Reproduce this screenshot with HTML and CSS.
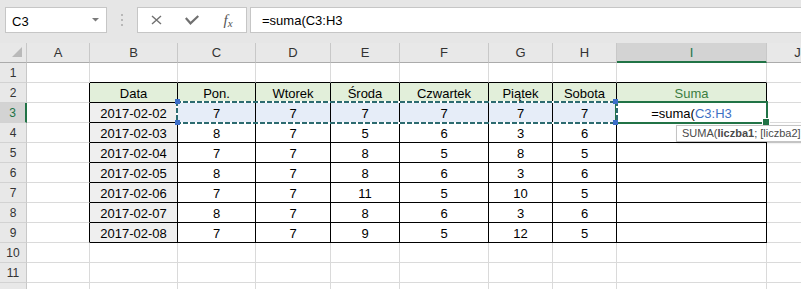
FILE: index.html
```html
<!DOCTYPE html>
<html lang="pl">
  <head>
      <meta charset="UTF-8">
      <title>Arkusz - suma</title>
      <link rel="stylesheet" href="styles.css">
  </head>
  <body>
      <div class="topbar">
          <div class="namebox">
              <span>C3</span>
              <svg width="7" height="4" viewBox="0 0 7 4"><polygon points="0,0 7,0 3.5,3.5" fill="#7a7a7a"/></svg>
          </div>
          <div class="grip">
              <svg width="2" height="12" viewBox="0 0 2 12"><rect y="0" width="2" height="2" fill="#b8b8b8"/><rect y="5" width="2" height="2" fill="#b8b8b8"/><rect y="10" width="2" height="2" fill="#b8b8b8"/></svg>
          </div>
          <div class="fxbtns">
              <span class="btn"><svg width="11" height="10" viewBox="0 0 11 10"><path d="M1 1L10 9M10 1L1 9" stroke="#707070" stroke-width="1.4" fill="none"/></svg></span>
              <span class="btn"><svg width="14" height="10" viewBox="0 0 14 10"><path d="M0.8 3L5.5 8.3L13.3 1" stroke="#707070" stroke-width="2.2" fill="none"/></svg></span>
              <span class="btn fx"><i>f</i><i class="sx">x</i></span>
          </div>
          <div class="formula">=suma(C3:H3</div>
      </div>

      <div class="sheet">
          <div class="row head">
              <div><svg class="corner" width="26" height="19" viewBox="0 0 26 19"><polygon points="12,14 22,14 22,4" fill="#b9b9b9"/></svg></div>
              <div>A</div><div>B</div><div>C</div><div>D</div><div>E</div><div>F</div><div>G</div><div>H</div><div class="on">I</div><div>J</div>
          </div>
          <div class="row">
              <div class="rh">1</div><div></div>
              <div class="tt"></div><div class="tt"></div><div class="tt"></div><div class="tt"></div><div class="tt"></div><div class="tt"></div><div class="tt"></div><div class="tt"></div>
              <div></div>
          </div>
          <div class="row">
              <div class="rh">2</div><div class="tl"></div>
              <div class="t hd">Data</div><div class="t hd">Pon.</div><div class="t hd">Wtorek</div><div class="t hd">Środa</div><div class="t hd">Czwartek</div><div class="t hd">Piątek</div><div class="t hd">Sobota</div><div class="t hd suma">Suma</div>
              <div></div>
          </div>
          <div class="row">
              <div class="rh on">3</div><div class="tl"></div>
              <div class="t dt">2017-02-02</div>
              <div class="t sel anchor">7<div class="ants"></div></div>
              <div class="t sel">7</div><div class="t sel">7</div><div class="t sel">7</div><div class="t sel">7</div><div class="t sel">7</div>
              <div class="t anchor">=suma(<span class="ref">C3:H3</span>
                  <div class="cur"></div>
                  <div class="tip">SUMA(<b>liczba1</b>; [liczba2]; ...)</div>
              </div>
              <div></div>
          </div>
          <div class="row">
              <div class="rh">4</div><div class="tl"></div>
              <div class="t dt">2017-02-03</div><div class="t">8</div><div class="t">7</div><div class="t">5</div><div class="t">6</div><div class="t">3</div><div class="t">6</div><div class="t"></div>
              <div></div>
          </div>
          <div class="row">
              <div class="rh">5</div><div class="tl"></div>
              <div class="t dt">2017-02-04</div><div class="t">7</div><div class="t">7</div><div class="t">8</div><div class="t">5</div><div class="t">8</div><div class="t">5</div><div class="t"></div>
              <div></div>
          </div>
          <div class="row">
              <div class="rh">6</div><div class="tl"></div>
              <div class="t dt">2017-02-05</div><div class="t">8</div><div class="t">7</div><div class="t">8</div><div class="t">6</div><div class="t">3</div><div class="t">6</div><div class="t"></div>
              <div></div>
          </div>
          <div class="row">
              <div class="rh">7</div><div class="tl"></div>
              <div class="t dt">2017-02-06</div><div class="t">7</div><div class="t">7</div><div class="t">11</div><div class="t">5</div><div class="t">10</div><div class="t">5</div><div class="t"></div>
              <div></div>
          </div>
          <div class="row">
              <div class="rh">8</div><div class="tl"></div>
              <div class="t dt">2017-02-07</div><div class="t">8</div><div class="t">7</div><div class="t">8</div><div class="t">6</div><div class="t">3</div><div class="t">6</div><div class="t"></div>
              <div></div>
          </div>
          <div class="row">
              <div class="rh">9</div><div class="tl"></div>
              <div class="t dt">2017-02-08</div><div class="t">7</div><div class="t">7</div><div class="t">9</div><div class="t">5</div><div class="t">12</div><div class="t">5</div><div class="t"></div>
              <div></div>
          </div>
          <div class="row">
              <div class="rh">10</div><div></div><div></div><div></div><div></div><div></div><div></div><div></div><div></div><div></div><div></div>
          </div>
          <div class="row">
              <div class="rh">11</div><div></div><div></div><div></div><div></div><div></div><div></div><div></div><div></div><div></div><div></div>
          </div>
          <div class="row">
              <div class="rh"></div><div></div><div></div><div></div><div></div><div></div><div></div><div></div><div></div><div></div><div></div>
          </div>
      </div>
  </body>
</html>
```

FILE: styles.css
```css
*     {
      box-sizing: border-box;
}
body  {
      margin: 0;
      background: #fff;
      color: #000;
      font-family: "Liberation Sans", Arial, sans-serif;
      font-size: 13px;
      overflow: hidden;
}

/* formula bar */
.topbar   {
      display: flex;
      align-items: flex-start;
      height: 43px;
      padding: 7px 0 0 5px;
      background: #e6e6e6;
}
.namebox  {
      display: flex;
      align-items: center;
      justify-content: space-between;
      flex: none;
      width: 102px;
      height: 26px;
      padding: 2px 7px 0 6px;
      background: #fff;
      border: 1px solid #c6c6c6;
}
.namebox svg  {
      margin-top: -3px;
}
.grip     {
      display: flex;
      justify-content: center;
      flex: none;
      width: 30px;
      padding-top: 7px;
}
.grip svg, .btn svg   {
      display: block;
}
.fxbtns   {
      display: flex;
      flex: none;
      width: 110px;
      height: 26px;
      background: #fff;
      border: 1px solid #c6c6c6;
}
.btn  {
      display: flex;
      align-items: center;
      justify-content: center;
      width: 36px;
      height: 24px;
}
.fx   {
      font-family: "Liberation Serif", serif;
      color: #555;
      padding-top: 1px;
}
.fx i     {
      font-size: 15px;
}
.fx .sx   {
      font-size: 11px;
      margin-top: 4px;
}
.formula  {
      flex: 1;
      height: 26px;
      margin-left: 3px;
      padding: 2px 0 0 11px;
      line-height: 22px;
      background: #fff;
      border: 1px solid #c6c6c6;
      border-right: none;
}

/* sheet */
.row  {
      display: grid;
      grid-template-columns: 27px 63px 88px 78px 75px 69px 89px 64px 64px 150px 62px;
      height: 20px;
}
.row > div    {
      height: 20px;
      border-right: 1px solid #dadada;
      border-bottom: 1px solid #dadada;
      text-align: center;
      line-height: 21px;
      white-space: nowrap;
}
.head > div   {
      background: #e8e8e8;
      color: #333;
      line-height: 19px;
      border-right-color: #c8c8c8;
      border-bottom-color: #ababab;
}
.head > .on   {
      background: #d3d3d3;
      color: #217346;
      border-bottom: 2px solid #217346;
}
.corner   {
      display: block;
}
.row > .rh    {
      background: #e8e8e8;
      color: #333;
      font-size: 12px;
      border-right-color: #c8c8c8;
      border-bottom-color: #d2d2d2;
}
.row > .rh.on {
      background: #d3d3d3;
      color: #217346;
      border-right: 2px solid #217346;
}

/* bordered table */
.row > .tl    {
      border-right-color: #000;
}
.row > .tt    {
      border-bottom-color: #000;
}
.row > .t     {
      border-right-color: #000;
      border-bottom-color: #000;
}
.hd   {
      background: #e2efda;
}
.suma     {
      color: #3b7d3f;
}
.dt   {
      background: #efefef;
}
.sel  {
      background: #e6edf8;
}
.ref  {
      color: #3e70c4;
}

/* selection overlays */
.anchor   {
      position: relative;
}
.ants     {
      position: absolute;
      left: -2px;
      top: -2px;
      width: 442px;
      height: 23px;
      z-index: 3;
      background:
        repeating-linear-gradient(90deg, #2c6b70 0 5px, #fff 5px 7px) left top / 100% 2px no-repeat,
        repeating-linear-gradient(90deg, #2c6b70 0 5px, #fff 5px 7px) left bottom / 100% 2px no-repeat,
        repeating-linear-gradient(180deg, #2c6b70 0 5px, #fff 5px 7px) left top / 2px 100% no-repeat,
        repeating-linear-gradient(180deg, #2c6b70 0 5px, #fff 5px 7px) right top / 2px 100% no-repeat;
}
.ants::before {
      content: "";
      position: absolute;
      left: -1px;
      top: -2px;
      width: 5px;
      height: 5px;
      background: #3d6ec9;
      box-shadow: 0 21px 0 #3d6ec9, 438px 0 0 #3d6ec9, 438px 21px 0 #3d6ec9;
}
.cur  {
      position: absolute;
      left: -2px;
      top: -2px;
      width: 153px;
      height: 23px;
      z-index: 2;
      border: 2px solid #217346;
}
.cur::after   {
      content: "";
      position: absolute;
      right: -4px;
      bottom: -4px;
      width: 6px;
      height: 6px;
      background: #217346;
      border: 1px solid #fff;
}
.tip  {
      position: absolute;
      left: 59px;
      top: 22px;
      z-index: 4;
      height: 17px;
      padding: 0 5px;
      background: #fff;
      border: 1px solid #c4c4c4;
      box-shadow: 1px 1px 2px rgba(0, 0, 0, 0.15);
      color: #4a4a4a;
      font-size: 11px;
      line-height: 15px;
      text-align: left;
      white-space: nowrap;
}
```
